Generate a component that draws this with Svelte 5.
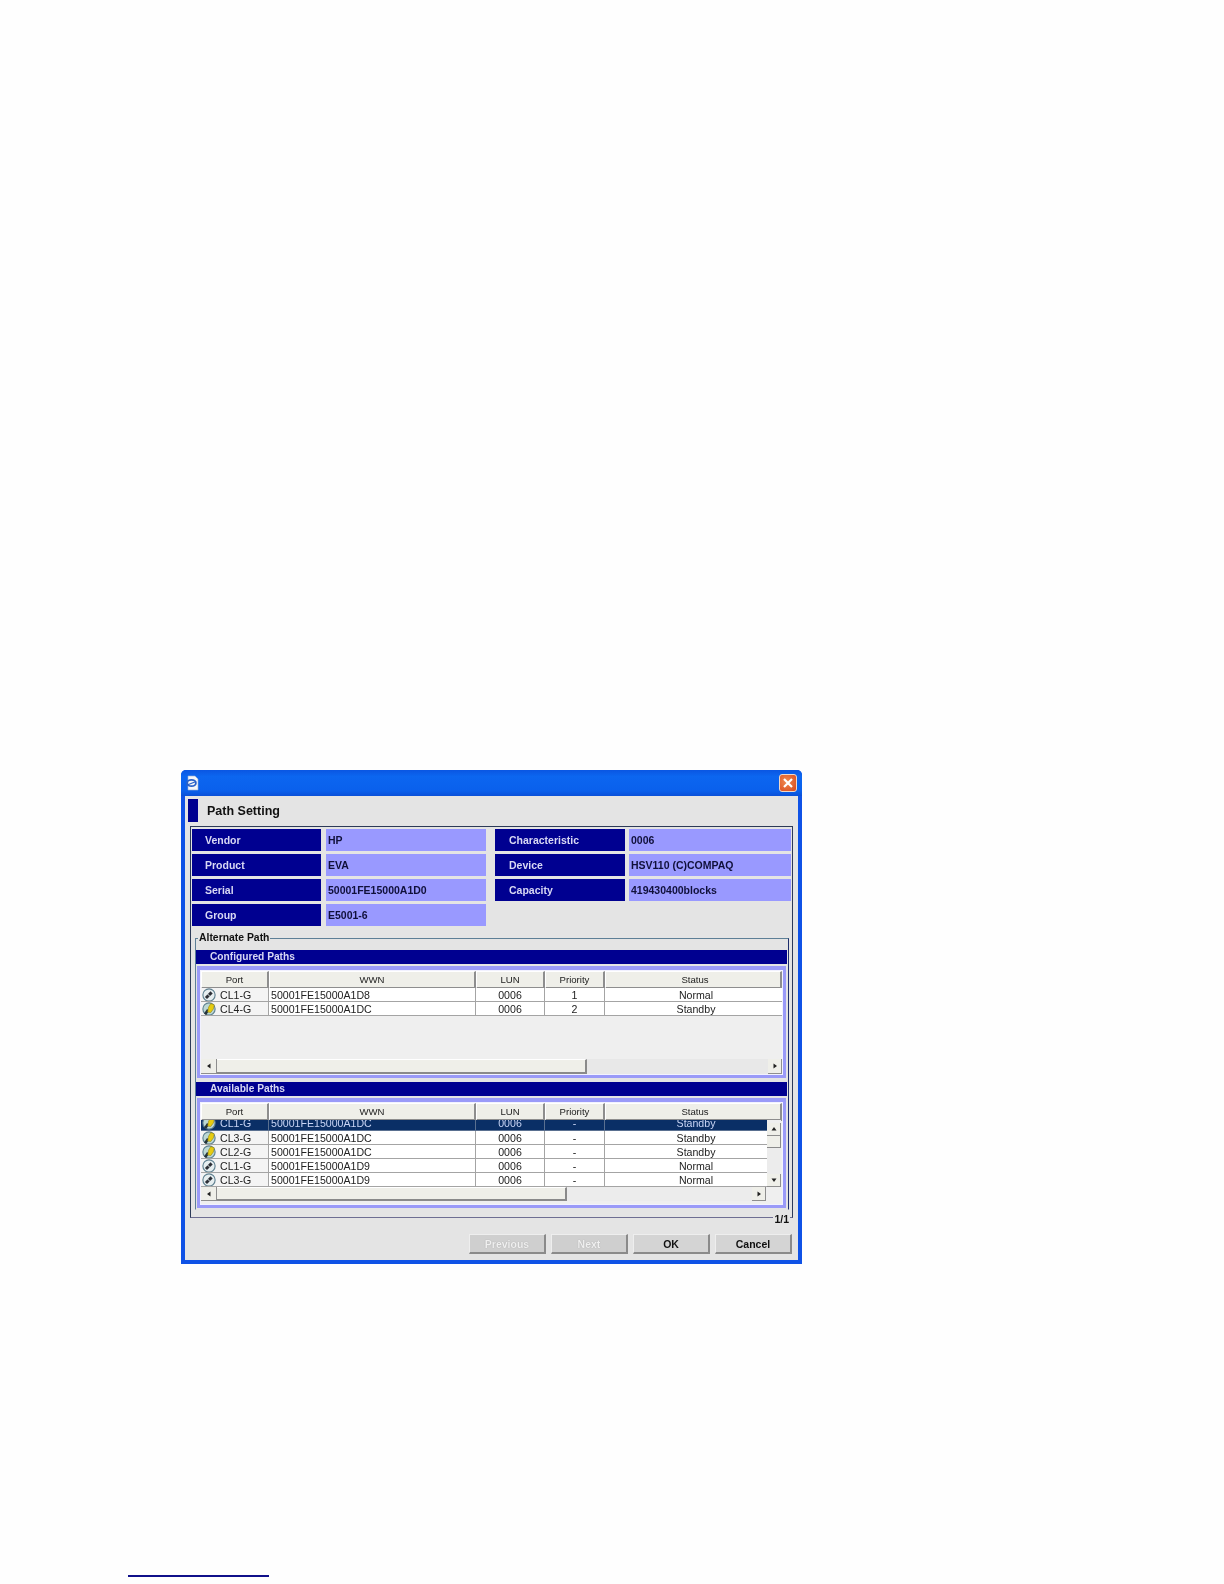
<script>
  const left = [['Vendor', 'HP'], ['Product', 'EVA'], ['Serial', '50001FE15000A1D0'], ['Group', 'E5001-6']];
  const right = [['Characteristic', '0006'], ['Device', 'HSV110 (C)COMPAQ'], ['Capacity', '419430400blocks']];
  const columns = ['Port', 'WWN', 'LUN', 'Priority', 'Status'];
  const configured = [
    { kind: 'n', port: 'CL1-G', wwn: '50001FE15000A1D8', lun: '0006', pri: '1', status: 'Normal' },
    { kind: 's', port: 'CL4-G', wwn: '50001FE15000A1DC', lun: '0006', pri: '2', status: 'Standby' }
  ];
  const available = [
    { kind: 's', port: 'CL1-G', wwn: '50001FE15000A1DC', lun: '0006', pri: '-', status: 'Standby', sel: true },
    { kind: 's', port: 'CL3-G', wwn: '50001FE15000A1DC', lun: '0006', pri: '-', status: 'Standby' },
    { kind: 's', port: 'CL2-G', wwn: '50001FE15000A1DC', lun: '0006', pri: '-', status: 'Standby' },
    { kind: 'n', port: 'CL1-G', wwn: '50001FE15000A1D9', lun: '0006', pri: '-', status: 'Normal' },
    { kind: 'n', port: 'CL3-G', wwn: '50001FE15000A1D9', lun: '0006', pri: '-', status: 'Normal' }
  ];
</script>

{#snippet portIcon(kind)}
  <svg class="port-icon" viewBox="0 0 16 16" aria-hidden="true">
    <circle cx="8" cy="8" r="7" fill={kind === 'n' ? '#e6eef0' : '#bcd8d4'} stroke="#5f8090" stroke-width="1.3" />
    {#if kind === 'n'}
      <path d="M4.5 11.5 L11 5" stroke="#2c2f36" stroke-width="3.4" />
      <path d="M6 6.5 L9.5 10" stroke="#e6eef0" stroke-width="1.1" />
    {:else}
      <path d="M3.5 14 L7 9" stroke="#26343c" stroke-width="3" />
      <path d="M6.5 11.5 L7.5 6 L10 1.8 L14 3.2 L13 8 L10 12 Z" fill="#e6cc10" stroke="#8a7a10" stroke-width=".6" />
    {/if}
  </svg>
{/snippet}

{#snippet headerRow()}
  <div class="thead">
    {#each columns as c}<div class="th">{c}</div>{/each}
  </div>
{/snippet}

{#snippet row(r)}
  <div class="tr" class:sel={r.sel}>
    <div class="td port">{@render portIcon(r.kind)}<span>{r.port}</span></div>
    <div class="td wwn">{r.wwn}</div>
    <div class="td mid">{r.lun}</div>
    <div class="td mid">{r.pri}</div>
    <div class="td mid stat">{r.status}</div>
  </div>
{/snippet}

{#snippet arrow(d)}
  <svg class="arrow" viewBox="0 0 6 6" aria-hidden="true"><path {d} fill="#222" /></svg>
{/snippet}

<div class="page">
  <div class="window">
    <div class="titlebar">
      <svg class="app-icon" viewBox="0 0 14 16" aria-hidden="true">
        <path d="M3 1 H10 L13 4 V15 H3 Z" fill="#f4f6fa" stroke="#9ab0d0" stroke-width=".6" />
        <ellipse cx="6.5" cy="8" rx="4.4" ry="3.2" fill="none" stroke="#2a62c8" stroke-width="1.8" />
        <path d="M1 10.5 L11 6.5" stroke="#2a62c8" stroke-width="1.3" />
      </svg>
      <button class="close" aria-label="Close">
        <svg viewBox="0 0 12 12" aria-hidden="true"><path d="M2 2 L10 10 M10 2 L2 10" stroke="#fff" stroke-width="2.2" /></svg>
      </button>
    </div>

    <div class="body">
      <div class="heading">
        <div class="heading-mark"></div>
        <div class="heading-text">Path Setting</div>
      </div>

      <div class="panel">
        <div class="info">
          <div class="pair pair-l">
            {#each left as [k, v]}
              <div class="label">{k}</div><div class="value">{v}</div>
            {/each}
          </div>
          <div class="pair pair-r">
            {#each right as [k, v]}
              <div class="label">{k}</div><div class="value">{v}</div>
            {/each}
          </div>
        </div>

        <fieldset class="alt">
          <legend>Alternate Path</legend>

          <div class="bar">Configured Paths</div>
          <div class="box box-a">
            <div class="inner">
              {@render headerRow()}
              <div class="rows-a">
                {#each configured as r}{@render row(r)}{/each}
              </div>
              <div class="hscroll">
                <div class="sbtn">{@render arrow('M4.5 0.5 V5.5 L1 3 Z')}</div>
                <div class="thumb thumb-a"></div>
                <div class="track"></div>
                <div class="sbtn">{@render arrow('M1.5 0.5 V5.5 L5 3 Z')}</div>
              </div>
            </div>
          </div>

          <div class="bar bar-b">Available Paths</div>
          <div class="box box-b">
            <div class="inner">
              {@render headerRow()}
              <div class="list-wrap">
                <div class="rows-b">
                  {#each available as r}{@render row(r)}{/each}
                </div>
                <div class="vscroll">
                  <div class="vgap"></div>
                  <div class="sbtn v">{@render arrow('M0.5 4.5 H5.5 L3 1 Z')}</div>
                  <div class="vthumb"></div>
                  <div class="vtrack"></div>
                  <div class="sbtn v">{@render arrow('M0.5 1.5 H5.5 L3 5 Z')}</div>
                </div>
              </div>
              <div class="hscroll hscroll-b">
                <div class="sbtn">{@render arrow('M4.5 0.5 V5.5 L1 3 Z')}</div>
                <div class="thumb thumb-b"></div>
                <div class="track"></div>
                <div class="sbtn">{@render arrow('M1.5 0.5 V5.5 L5 3 Z')}</div>
              </div>
            </div>
          </div>
        </fieldset>
        <div class="pageno">1/1</div>
      </div>

      <div class="buttons">
        <button class="btn" disabled>Previous</button>
        <button class="btn" disabled>Next</button>
        <button class="btn">OK</button>
        <button class="btn">Cancel</button>
      </div>
    </div>
  </div>
  <div class="footer-rule"></div>
</div>

<style>
  :global(body) { margin: 0; background: #fefefe; }
  .page {
    height: 1584px;
    box-sizing: border-box;
    padding: 770px 0 0 128px;
    font-family: "Liberation Sans", Arial, sans-serif;
    overflow: hidden;
  }
  .window {
    width: 621px;
    height: 494px;
    box-sizing: border-box;
    margin-left: 53px;
    background: #0f52e6;
    border-radius: 5px 5px 0 0;
    display: flex;
    flex-direction: column;
    filter: blur(0.45px);
  }
  .titlebar {
    height: 26px;
    flex: none;
    display: flex;
    align-items: center;
    justify-content: space-between;
    padding: 0 5px 0 4px;
    background: linear-gradient(#0a56e2, #0c66f0 25%, #0a60ec 80%, #0a50d8);
    border-radius: 5px 5px 0 0;
  }
  .app-icon { width: 14px; height: 16px; }
  .close {
    width: 18px;
    height: 18px;
    padding: 2px;
    border: 1px solid #f0d8c8;
    border-radius: 3px;
    background: radial-gradient(circle at 40% 40%, #f08a50, #d8481c);
    display: flex;
  }
  .close svg { width: 100%; height: 100%; }
  .body {
    flex: 1;
    margin: 0 4px 4px;
    padding: 3px 3px 6px;
    background: #e4e4e4;
    display: flex;
    flex-direction: column;
    min-height: 0;
  }
  .heading { display: flex; align-items: center; height: 23px; flex: none; }
  .heading-mark { width: 10px; height: 23px; background: #000090; }
  .heading-text { margin-left: 9px; font-size: 12.5px; font-weight: 700; color: #111; }

  .panel {
    position: relative;
    margin: 4px 2px 0 2px;
    height: 392px;
    box-sizing: border-box;
    border: 1px solid #2c3a58;
    border-bottom-color: #6e6e92;
    padding: 2px 0 0 1px;
    flex: none;
  }
  .info { display: flex; gap: 9px; }
  .pair { display: grid; row-gap: 3px; grid-auto-rows: 22px; align-content: start; }
  .pair-l { grid-template-columns: 129px 160px; column-gap: 5px; }
  .pair-r { grid-template-columns: 130px 162px; column-gap: 4px; }
  .label, .value {
    font-size: 10.5px;
    font-weight: 700;
    line-height: 22px;
  }
  .label { background: #000090; color: #d8d8f4; padding-left: 13px; }
  .pair-r .label { padding-left: 14px; }
  .value { background: #9999ff; color: #10103a; padding-left: 2px; }

  .alt {
    margin: 6px 0 0 3px;
    padding: 6px 0 2px 0;
    width: 594px;
    height: 278px;
    box-sizing: border-box;
    border: 1px solid #5d7f96;
    border-right-color: #1c2c6c;
    border-bottom-color: transparent;
    min-width: 0;
  }
  legend {
    margin-left: 2px;
    padding: 0 1px;
    font-size: 10.4px;
    font-weight: 700;
    line-height: 12px;
    color: #111;
  }
  .bar {
    height: 14px;
    width: 591px;
    background: #000090;
    color: #d8d8f4;
    font-size: 10.2px;
    font-weight: 700;
    line-height: 14px;
    padding-left: 14px;
    box-sizing: border-box;
  }
  .bar-b { margin-top: 4px; }
  .box {
    margin: 2px 0 0 1px;
    width: 589px;
    box-sizing: border-box;
    background: #9a9af8;
    padding: 5px 4px 4px 4px;
  }
  .box-a { height: 112px; }
  .box-b { height: 110px; }
  .inner {
    height: 100%;
    background: #efefef;
    display: flex;
    flex-direction: column;
    box-shadow: 0 0 0 1px #f2f2ff;
  }
  .thead {
    display: grid;
    grid-template-columns: 68px 207px 69px 60px 177px;
    height: 17px;
    flex: none;
  }
  .th {
    font-size: 9.6px;
    line-height: 15px;
    text-align: center;
    color: #222;
    background: #efefe9;
    border-top: 1px solid #fff;
    border-left: 1px solid #fff;
    border-right: 2px solid #8e8e8e;
    border-bottom: 2px solid #8e8e8e;
    box-sizing: border-box;
    height: 100%;
  }
  .th:last-child { padding-left: 4px; }
  .rows-a { flex: 1; min-height: 0; }
  .tr {
    display: grid;
    grid-template-columns: 68px 207px 69px 60px 177px;
    height: 14px;
    background: #fff;
    color: #222;
    font-size: 10.6px;
    box-sizing: border-box;
    overflow: hidden;
    width: 581px;
  }
  .td {
    height: 14px;
    line-height: 14px;
    box-sizing: border-box;
    border-bottom: 1px solid #a4a4a4;
    border-right: 1px solid #a4a4a4;
    white-space: nowrap;
    overflow: hidden;
  }
  .td:last-child { border-right: none; }
  .port { display: flex; align-items: center; background: #f4f4f4; padding-left: 1px; }
  .port span { margin-left: 4px; }
  .port-icon { width: 14px; height: 14px; flex: none; }
  .wwn { padding-left: 2px; }
  .mid { text-align: center; }
  .stat { padding-left: 5px; }

  .list-wrap { display: flex; height: 67px; flex: none; }
  .rows-b { width: 566px; overflow: hidden; flex: none; }
  .rows-b .tr:first-child { height: 11px; }
  .rows-b .tr:first-child .td { height: 11px; line-height: 7px; }
  .rows-b .tr:first-child .port { align-items: flex-start; }
  .rows-b .tr:first-child .port-icon { margin-top: -4px; }
  .tr.sel { background: #0a2f66; color: #c8d4f4; }
  .tr.sel .td { background: #0a2f66; border-color: #5a7090; }

  .hscroll { display: flex; height: 15px; flex: none; }
  .hscroll-b { width: 565px; height: 14px; }
  .sbtn {
    width: 16px;
    height: 100%;
    flex: none;
    box-sizing: border-box;
    background: #efefe9;
    border-right: 1px solid #8e8e8e;
    border-bottom: 1px solid #8e8e8e;
    display: flex;
    align-items: center;
    justify-content: center;
  }
  .hscroll .sbtn:last-child { width: 14px; }
  .arrow { width: 6px; height: 6px; }
  .thumb {
    height: 100%;
    flex: none;
    box-sizing: border-box;
    background: #efefe9;
    border-top: 1px solid #fff;
    border-right: 2px solid #8a8a8a;
    border-bottom: 2px solid #8a8a8a;
  }
  .thumb-a { width: 370px; }
  .thumb-b { width: 350px; }
  .track { flex: 1; background: #e8e8e8; }
  .hscroll-b .track { background: #ececec; }
  .vscroll { width: 14px; flex: none; display: flex; flex-direction: column; background: #ececec; }
  .vgap { height: 3px; flex: none; background: #efefef; }
  .sbtn.v { width: 14px; height: 13px; flex: none; }
  .vthumb {
    height: 12px;
    flex: none;
    box-sizing: border-box;
    background: #efefe9;
    border-right: 1px solid #8a8a8a;
    border-bottom: 1px solid #8a8a8a;
  }
  .vtrack { flex: 1; }

  .pageno {
    position: absolute;
    right: 2px;
    bottom: -8px;
    padding: 0 1px;
    background: #e4e4e4;
    font-size: 10.5px;
    font-weight: 700;
    line-height: 12px;
    color: #111;
  }

  .buttons { display: flex; justify-content: flex-end; gap: 5px; margin: 16px 0 0; height: 20px; padding-right: 3px; }
  .btn {
    width: 77px;
    height: 20px;
    padding: 0;
    font-family: inherit;
    font-size: 10.5px;
    font-weight: 700;
    color: #111;
    background: #d4d4d4;
    border: 1px solid #eee;
    border-right: 2px solid #8a8a8a;
    border-bottom: 2px solid #8a8a8a;
    box-sizing: border-box;
  }
  .btn:disabled { color: #f0f0f0; text-shadow: 0 0 1px #999; background: #cfcfcf; }

  .footer-rule { margin-top: 311px; width: 141px; height: 2px; background: #10108a; }
</style>
